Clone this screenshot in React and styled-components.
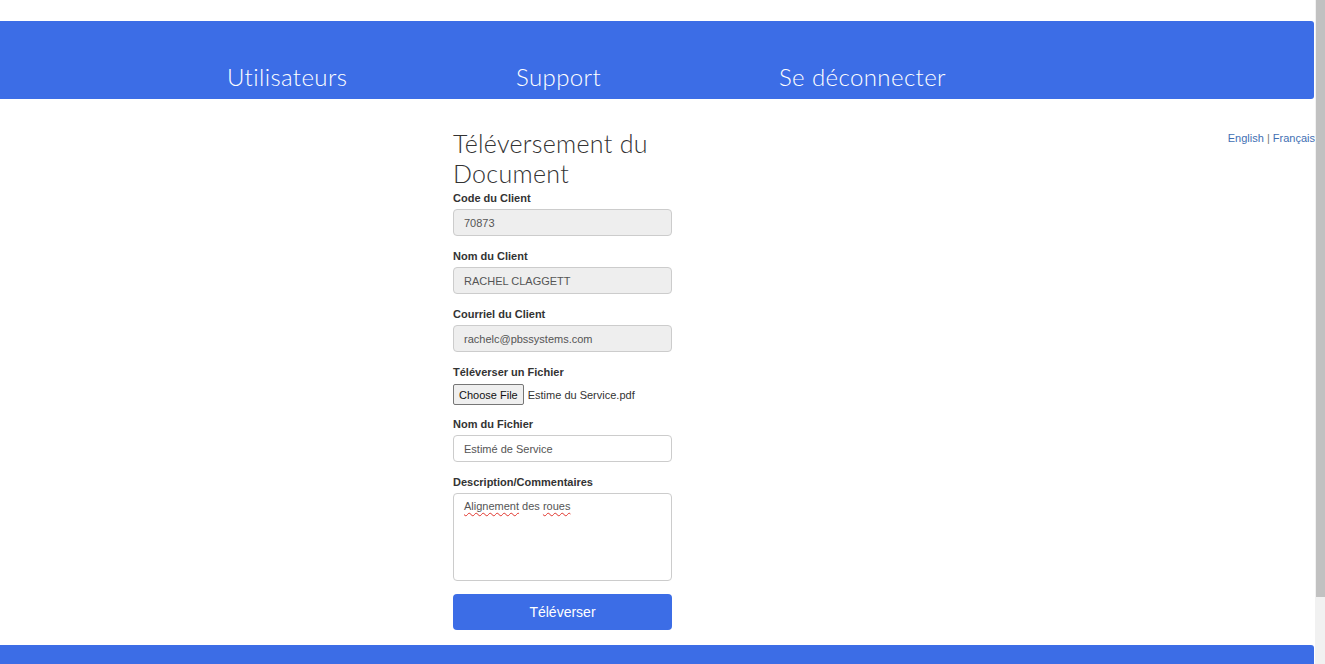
import React from "react";
import styled, { createGlobalStyle } from "styled-components";

const GlobalStyle = createGlobalStyle`
  html, body {
    margin: 0;
    padding: 0;
    background: #fff;
  }
  body {
    font-family: "Liberation Sans", Arial, sans-serif;
  }
`;

const BLUE = "#3c6de6";

const Page = styled.div`
  min-height: 738px;
  margin-right: 10px;
  display: flex;
  flex-direction: column;
`;

// Window scrollbar, drawn over the right edge
const ScrollTrack = styled.div`
  position: fixed;
  top: 0;
  right: 0;
  width: 10px;
  height: 100vh;
  background: #f1f1f1;
`;

const ScrollThumb = styled.div`
  margin-left: 1px;
  width: 9px;
  height: 597px;
  background: #c1c1c1;
`;

// Top navigation bar
const NavBar = styled.nav`
  margin-top: 21px;
  margin-right: 1px;
  height: 78px;
  box-sizing: border-box;
  background: ${BLUE};
  border-radius: 0 3px 3px 0;
  display: flex;
  align-items: flex-end;
  padding: 0 0 8px 227px;
`;

const NavLink = styled.a`
  width: ${(p) => (p.$w ? `${p.$w}px` : "auto")};
  font-family: "Lato", "Open Sans", sans-serif;
  font-weight: 300;
  font-size: 24px;
  letter-spacing: 0.4px;
  line-height: 28px;
  color: #fff;
  text-decoration: none;
`;

// Main content
const Main = styled.main`
  display: grid;
  grid-template-columns: 453px 219px 1fr;
  align-items: start;
`;

const FormColumn = styled.form`
  grid-column: 2;
  display: flex;
  flex-direction: column;
  padding-top: 29px;
  padding-bottom: 15px;
`;

const Lang = styled.div`
  grid-column: 3;
  justify-self: end;
  margin-top: 32px;
  font-size: 11px;
  line-height: 14px;
  color: #777;
`;

const LangLink = styled.a`
  color: #3f6fb3;
  text-decoration: none;
`;

const Title = styled.h2`
  font-family: "Lato", "Open Sans", sans-serif;
  font-weight: 300;
  font-size: 25px;
  letter-spacing: 0.3px;
  line-height: 30px;
  color: #333;
  margin: 0 0 3px;
`;

const Group = styled.div`
  display: flex;
  flex-direction: column;
  margin-bottom: ${(p) => p.$gap || 13}px;
`;

const Label = styled.label`
  font-size: 11px;
  font-weight: bold;
  line-height: 15px;
  color: #333;
  margin-bottom: 3px;
`;

const Input = styled.input`
  box-sizing: border-box;
  height: 27px;
  width: 100%;
  padding: 0 10px;
  font-family: "Liberation Sans", Arial, sans-serif;
  font-size: 11px;
  color: #555;
  background: ${(p) => (p.readOnly ? "#eeeeee" : "#fff")};
  border: 1px solid #cccccc;
  border-radius: 4px;
  outline: none;
`;

const FileRow = styled.div`
  display: flex;
  align-items: center;
  gap: 4px;
  height: 21px;
  margin-top: 1px;
  font-size: 11px;
  color: #333;
`;

const FileButton = styled.button`
  box-sizing: border-box;
  height: 21px;
  padding: 0 5px;
  font-family: "Liberation Sans", Arial, sans-serif;
  font-size: 11px;
  color: #111;
  background: #efefef;
  border: 1px solid #767676;
  border-radius: 2px;
`;

const TextArea = styled.div`
  box-sizing: border-box;
  height: 88px;
  padding: 5px 10px;
  font-size: 11px;
  line-height: 14px;
  color: #555;
  background: #fff;
  border: 1px solid #cccccc;
  border-radius: 4px;
`;

const Misspelled = styled.span`
  text-decoration: underline wavy #e0342c;
  text-decoration-thickness: 1px;
  text-underline-offset: 2px;
`;

const Submit = styled.button`
  height: 36px;
  width: 100%;
  background: ${BLUE};
  color: #fff;
  border: none;
  border-radius: 4px;
  font-family: "Liberation Sans", Arial, sans-serif;
  font-size: 14px;
`;

const Footer = styled.footer`
  flex: 1;
  min-height: 93px;
  margin-right: 1px;
  background: ${BLUE};
  border-radius: 0 3px 0 0;
`;

const App = () => {
  return (
    <>
      <GlobalStyle />
      <Page>
        <NavBar>
          <NavLink href="#" $w={289}>Utilisateurs</NavLink>
          <NavLink href="#" $w={263}>Support</NavLink>
          <NavLink href="#">Se déconnecter</NavLink>
        </NavBar>

        <Main>
          <FormColumn onSubmit={(e) => e.preventDefault()}>
            <Title>
              Téléversement du
              <br />
              Document
            </Title>

            <Group>
              <Label>Code du Client</Label>
              <Input readOnly value="70873" />
            </Group>

            <Group>
              <Label>Nom du Client</Label>
              <Input readOnly value="RACHEL CLAGGETT" />
            </Group>

            <Group>
              <Label>Courriel du Client</Label>
              <Input readOnly value="rachelc@pbssystems.com" />
            </Group>

            <Group $gap={12}>
              <Label>Téléverser un Fichier</Label>
              <FileRow>
                <FileButton type="button">Choose File</FileButton>
                <span>Estime du Service.pdf</span>
              </FileRow>
            </Group>

            <Group>
              <Label>Nom du Fichier</Label>
              <Input defaultValue="Estimé de Service" />
            </Group>

            <Group>
              <Label>Description/Commentaires</Label>
              <TextArea>
                <Misspelled>Alignement</Misspelled> des <Misspelled>roues</Misspelled>
              </TextArea>
            </Group>

            <Submit type="submit">Téléverser</Submit>
          </FormColumn>

          <Lang>
            <LangLink href="#">English</LangLink> | <LangLink href="#">Français</LangLink>
          </Lang>
        </Main>

        <Footer />
      </Page>
      <ScrollTrack>
        <ScrollThumb />
      </ScrollTrack>
    </>
  );
};

export default App;
